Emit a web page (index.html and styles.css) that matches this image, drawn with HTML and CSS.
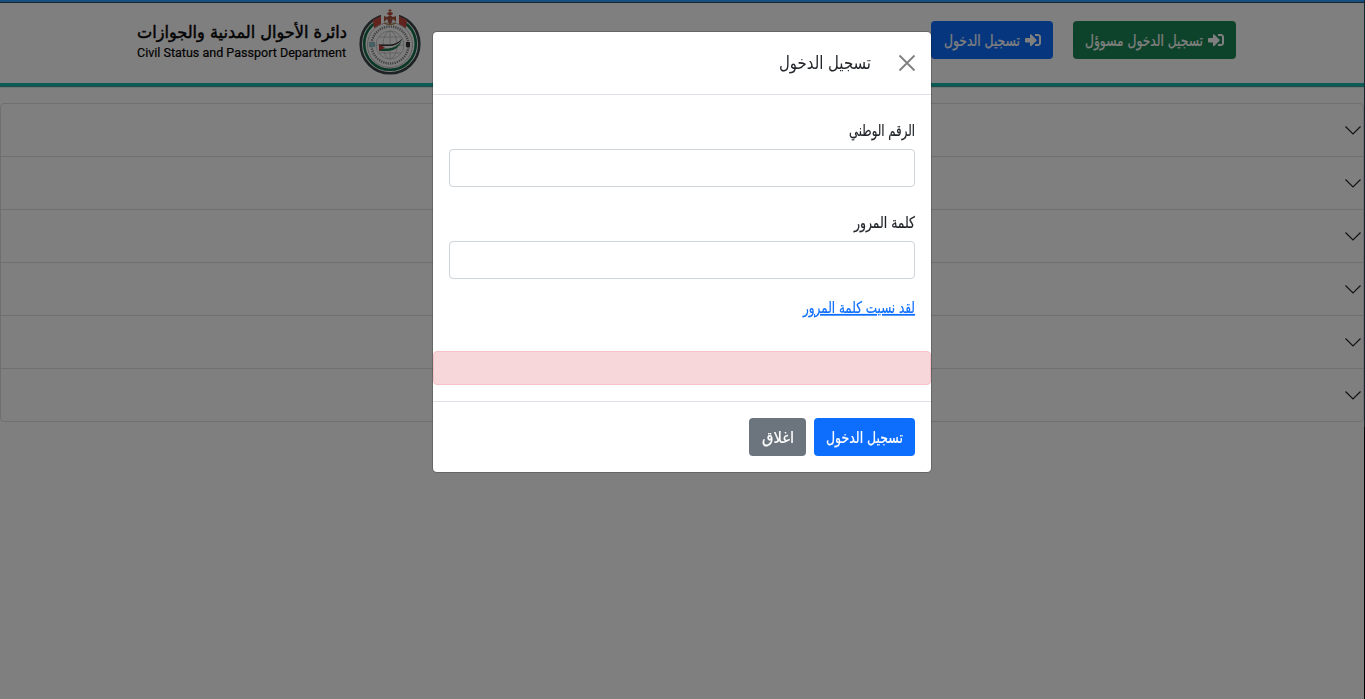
FILE: index.html
```html
<!DOCTYPE html>
<html lang="ar" dir="rtl">
<head>
<meta charset="utf-8">
<title>دائرة الأحوال المدنية والجوازات</title>
<link rel="stylesheet" href="styles.css">
</head>
<body>
<div class="page">
  <header class="topbar">
    <div class="actions">
      <button class="btn btn-success"><svg class="login-icon" viewBox="0 0 512 512"><path fill="currentColor" d="M416 448h-84c-6.600 0-12-5.400-12-12v-40c0-6.600 5.400-12 12-12h84c17.700 0 32-14.300 32-32V160c0-17.700-14.300-32-32-32h-84c-6.600 0-12-5.400-12-12V76c0-6.600 5.400-12 12-12h84c53 0 96 43 96 96v192c0 53-43 96-96 96zm-47-201L201 79c-15-15-41-4.500-41 17v96H24c-13.300 0-24 10.700-24 24v96c0 13.300 10.700 24 24 24h136v96c0 21.500 26 32 41 17l168-168c9.300-9.400 9.300-24.600 0-34z"/></svg><svg class="label" width="118" height="24"><text x="118" y="18" textLength="118" lengthAdjust="spacingAndGlyphs">تسجيل الدخول مسوؤل</text></svg></button>
      <button class="btn btn-primary"><svg class="login-icon" viewBox="0 0 512 512"><path fill="currentColor" d="M416 448h-84c-6.600 0-12-5.400-12-12v-40c0-6.600 5.400-12 12-12h84c17.700 0 32-14.300 32-32V160c0-17.700-14.300-32-32-32h-84c-6.600 0-12-5.400-12-12V76c0-6.600 5.400-12 12-12h84c53 0 96 43 96 96v192c0 53-43 96-96 96zm-47-201L201 79c-15-15-41-4.500-41 17v96H24c-13.300 0-24 10.700-24 24v96c0 13.300 10.700 24 24 24h136v96c0 21.500 26 32 41 17l168-168c9.300-9.400 9.300-24.600 0-34z"/></svg><svg class="label" width="77" height="24"><text x="77" y="18" textLength="76" lengthAdjust="spacingAndGlyphs">تسجيل الدخول</text></svg></button>
    </div>
    <div class="brand">
      <svg class="emblem" viewBox="0 0 64 68">
        <circle cx="32" cy="37" r="29.300" fill="none" stroke="#3a4448" stroke-width="2.600"/>
        <circle cx="32" cy="37" r="25.800" fill="none" stroke="#17714c" stroke-width="2.600"/>
        <path d="M15 13L23 9V19L16 21zM49 13L41 9V19L48 21z" fill="#c4483e"/>
        <path d="M23 6H41V20H23z" fill="#fff"/>
        <circle cx="32" cy="38" r="22.500" fill="#fafafa" stroke="#aaa" stroke-width=".8"/>
        <circle cx="32" cy="38" r="18.500" fill="none" stroke="#888" stroke-width="2.400" stroke-dasharray="1.300 1"/>
        <g fill="none" stroke="#bbb" stroke-width=".8"><circle cx="32" cy="38" r="14"/><ellipse cx="32" cy="38" rx="7" ry="14"/><path d="M18 38H46M21 30H43M21 46H43M32 24V52"/></g>
        <path d="M21 37.500H32Q39 37 45 31Q40 40 30 40H21z" fill="#333"/>
        <path d="M21 39H31Q39 39 44 33Q39 42 30 42H21z" fill="#fff"/>
        <path d="M21 41.500H30Q39 41 44 33Q40 44 30 44H21z" fill="#21774e"/><path d="M21 37.500L27 40.500L21 44z" fill="#c43c38"/>
        <path d="M11 35H17V40H11z" fill="#8bbfc9"/><path d="M48 35H52V40H48z" fill="#333"/>
        <path d="M32 2V6M30.500 3.500H33.500" stroke="#b74835" stroke-width="1"/>
        <path d="M29 6Q32 4 35 6L34 8H30z" fill="#bd4c3a"/><path d="M26 9L29 10L32 8L35 10L38 9V15L35 12L33 17H31L29 12L26 15z" fill="#a65545"/><path d="M26 16Q32 19 38 16" fill="none" stroke="#a57a48" stroke-width="1.200"/>
      </svg>
      <svg class="wordmark" width="211" height="56">
        <text class="brand-ar" x="211" y="31" textLength="210" lengthAdjust="spacingAndGlyphs">دائرة الأحوال المدنية والجوازات</text>
        <text class="brand-en" x="1" y="50" textLength="209" lengthAdjust="spacingAndGlyphs">Civil Status and Passport Department</text>
      </svg>
    </div>
  </header>
  <main class="accordion">
    <div class="item"><svg viewBox="0 0 16 16"><path d="M.5 4.500L8 12L15.500 4.500"/></svg></div>
    <div class="item"><svg viewBox="0 0 16 16"><path d="M.5 4.500L8 12L15.500 4.500"/></svg></div>
    <div class="item"><svg viewBox="0 0 16 16"><path d="M.5 4.500L8 12L15.500 4.500"/></svg></div>
    <div class="item"><svg viewBox="0 0 16 16"><path d="M.5 4.500L8 12L15.500 4.500"/></svg></div>
    <div class="item"><svg viewBox="0 0 16 16"><path d="M.5 4.500L8 12L15.500 4.500"/></svg></div>
    <div class="item"><svg viewBox="0 0 16 16"><path d="M.5 4.500L8 12L15.500 4.500"/></svg></div>
  </main>
</div>
<div class="backdrop">
  <section class="modal" role="dialog">
    <div class="modal-header">
      <svg class="close" viewBox="0 0 16 16"><path d="M.5 .5L15.500 15.500M15.500 .5L.5 15.500"/></svg>
      <svg class="title" width="92" height="30"><text x="92" y="21" textLength="92" lengthAdjust="spacingAndGlyphs">تسجيل الدخول</text></svg>
    </div>
    <form class="modal-body">
      <svg class="label" width="67" height="24"><text x="67" y="17" textLength="66" lengthAdjust="spacingAndGlyphs">الرقم الوطني</text></svg>
      <input class="field" type="text">
      <svg class="label" width="62" height="24"><text x="62" y="17" textLength="61" lengthAdjust="spacingAndGlyphs">كلمة المرور</text></svg>
      <input class="field" type="password">
      <a class="forgot" href="#"><svg class="label" width="113" height="24"><text x="113" y="17" textLength="112" lengthAdjust="spacingAndGlyphs">لقد نسيت كلمة المرور</text></svg></a>
    </form>
    <div class="alert"></div>
    <div class="modal-footer">
      <button class="btn btn-primary"><svg class="label" width="77" height="24"><text x="77" y="18" textLength="77" lengthAdjust="spacingAndGlyphs">تسجيل الدخول</text></svg></button>
      <button class="btn btn-secondary"><svg class="label" width="33" height="24"><text x="33" y="18" textLength="32" lengthAdjust="spacingAndGlyphs">اغلاق</text></svg></button>
    </div>
  </section>
</div>
</body>
</html>
```
FILE: styles.css
```css
* { box-sizing: border-box; }
body { margin: 0; height: 699px; overflow: hidden; background: linear-gradient(#304252 427px, #000 427px); color: #212529; font: 16px/24px "DejaVu Sans", sans-serif; }
svg { display: block; flex: none; overflow: visible; }
.page { height: 699px; margin-right: 1px; background: #fff; }
.topbar { display: flex; justify-content: space-between; height: 86px; padding: 0 128px 0 136px; border-top: 2px solid #2d9cff; border-bottom: 3px solid #16b8ae; box-shadow: inset 0 1px #304860, 0 1px 1px #3d9a94; }
.actions { display: flex; gap: 20px; padding-top: 19px; }
.btn { display: flex; align-items: center; gap: 4px; height: 38px; padding: 0 12px; border: 0; border-radius: 4px; color: #fff; font: inherit; }
.btn-success { background: #198754; }
.btn-primary { background: #0d6efd; }
.btn-secondary { background: #6c757d; }
.label { font-family: "DejaVu Sans Condensed", "DejaVu Sans", sans-serif; font-size: 16px; fill: currentColor; stroke: currentColor; stroke-width: .2px; }
.login-icon { width: 16px; height: 16px; margin-left: 1px; }
.brand { display: flex; gap: 12px; padding-top: 5px; }
.emblem { width: 64px; height: 68px; margin-right: 2px; margin-left: -1px; }
.brand-ar { font: 17px "DejaVu Sans", sans-serif; stroke: #050505; stroke-width: .5px; }
.brand-en { font: 400 12.500px Roboto, sans-serif; direction: ltr; stroke: #050505; stroke-width: .2px; }
.wordmark { fill: #050505; }
.accordion { margin-top: 17px; border: 1px solid #dfdfdf; border-radius: 4px; }
.item { display: flex; align-items: center; height: 53px; padding-right: 2px; border-bottom: 1px solid #dfdfdf; }
.item:last-child { height: 52px; border: 0; }
.item svg { width: 16px; height: 16px; fill: none; stroke: #212529; stroke-width: 1.200; }
.backdrop { position: fixed; inset: 0; display: flex; justify-content: center; align-items: flex-start; padding: 31px 1px 0 0; background: rgba(0,0,0,.5); direction: rtl; }
.modal { width: 500px; height: 442px; border: 1px solid rgba(0,0,0,.2); border-radius: 5px; background: #fff; background-clip: padding-box; }
.modal-header { display: flex; align-items: center; gap: 28px; height: 63px; padding: 0 16px; border-bottom: 1px solid #dee2e6; }
.close { width: 16px; height: 16px; fill: none; stroke: #7f7f7f; stroke-width: 1.800; }
.title { font-family: "DejaVu Sans Condensed", "DejaVu Sans", sans-serif; font-size: 18px; fill: #212529; }
.modal-body { padding: 24px 16px 0; height: 256px; }
.field { display: block; width: 100%; height: 38px; margin: 6px 0 24px; border: 1px solid #ced4da; border-radius: 4px; background: #fff; }
.modal-body .field:nth-of-type(2) { margin-bottom: 17px; }
.forgot { display: block; width: 113px; color: #0d6efd; text-decoration: none; }
.forgot text { text-decoration: underline; }
.alert { height: 34px; border: 1px solid #f5c2c7; border-radius: 4px; background: #f8d7da; }
.modal-footer { display: flex; gap: 8px; margin-top: 16px; padding: 16px; border-top: 1px solid #dee2e6; }
```
